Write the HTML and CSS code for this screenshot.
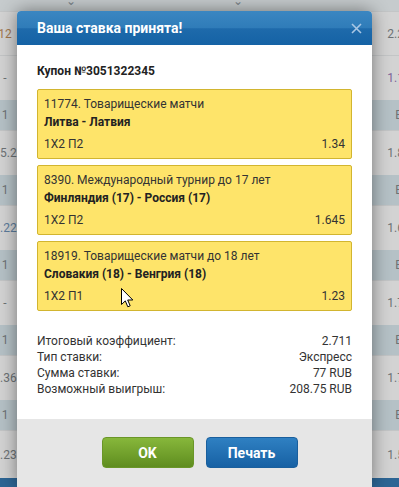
FILE: index.html
```html
<!DOCTYPE html>
<html lang="ru">
<head>
  <meta charset="UTF-8">
  <title>Ваша ставка принята!</title>
  <link rel="stylesheet" href="styles.css">
</head>
<body>
  <div class="page">
    <div class="topbar">
      <span class="chev chev-a">&#8964;</span>
      <span class="chev chev-b">&#8964;</span>
    </div>
    <div class="row light h44"><span class="lcell orange">12</span><span class="rcell">2.21</span></div>
    <div class="row light h45"><span class="lcell">-</span><span class="rcell purple">1.14</span></div>
    <div class="row blue"><span class="lcell">1</span><span class="rcell">Б</span></div>
    <div class="row light h45"><span class="lcell">15.2</span><span class="rcell">1.85</span></div>
    <div class="row blue"><span class="lcell">1</span><span class="rcell">Б</span></div>
    <div class="row light h45"><span class="lcell bluish">1.22</span><span class="rcell">1.64</span></div>
    <div class="row blue"><span class="lcell">1</span><span class="rcell">Б</span></div>
    <div class="row light h45"><span class="lcell">-</span><span class="rcell">1.75</span></div>
    <div class="row blue"><span class="lcell">1</span><span class="rcell">Б</span></div>
    <div class="row light h45"><span class="lcell">1.36</span><span class="rcell">1.72</span></div>
    <div class="row blue"><span class="lcell">1</span><span class="rcell">Б</span></div>
    <div class="row light h48"><span class="lcell">1.23</span><span class="rcell">1.55</span></div>
    <div class="row dark"></div>
  </div>

  <div class="modal">
    <div class="modal-head">
      <span class="modal-title">Ваша ставка принята!</span>
      <svg class="close" width="11" height="11" viewBox="0 0 11 11"><path d="M1 1L10 10M10 1L1 10" stroke="#a9c7e4" stroke-width="1.6"/></svg>
    </div>
    <div class="modal-body">
      <div class="coupon">Купон №3051322345</div>
      <div class="bets">
        <div class="bet">
          <div class="bet-league">11774. Товарищеские матчи</div>
          <div class="bet-match">Литва - Латвия</div>
          <div class="bet-row"><span>1X2 П2</span><span>1.34</span></div>
        </div>
        <div class="bet">
          <div class="bet-league">8390. Международный турнир до 17 лет</div>
          <div class="bet-match">Финляндия (17) - Россия (17)</div>
          <div class="bet-row"><span>1X2 П2</span><span>1.645</span></div>
        </div>
        <div class="bet">
          <div class="bet-league">18919. Товарищеские матчи до 18 лет</div>
          <div class="bet-match">Словакия (18) - Венгрия (18)</div>
          <div class="bet-row"><span>1X2 П1</span><span>1.23</span></div>
        </div>
      </div>
      <div class="summary">
        <div class="sum-row"><span>Итоговый коэффициент:</span><span>2.711</span></div>
        <div class="sum-row"><span>Тип ставки:</span><span>Экспресс</span></div>
        <div class="sum-row"><span>Сумма ставки:</span><span>77 RUB</span></div>
        <div class="sum-row"><span>Возможный выигрыш:</span><span>208.75 RUB</span></div>
      </div>
    </div>
    <div class="modal-foot">
      <button class="btn btn-ok">OK</button>
      <button class="btn btn-print">Печать</button>
    </div>
  </div>

  <svg class="cursor" width="13" height="20" viewBox="0 0 13 20">
    <path d="M0.5 0.5V16.5L4.3 12.9L6.8 18.8L9.2 17.8L6.7 12H11.8Z" fill="#fff" stroke="#000" stroke-width="1" stroke-linejoin="round"/>
  </svg>
</body>
</html>
```

FILE: styles.css
```css
body { margin: 0; font-family: Roboto, "Liberation Sans", Arial, sans-serif; font-size: 12px; color: #333; overflow: hidden; }
.page { width: 399px; height: 487px; background: #d2d3d3; }
.topbar { height: 11px; background: #c6cbcd; position: relative; }
.chev { position: absolute; top: -6px; font-size: 12px; color: #7b8489; }
.chev-a { left: 66px; }
.chev-b { left: 233px; }
.row { display: flex; justify-content: space-between; align-items: center; height: 30px; font-size: 12px; color: #6d7275; }
.row.light { background: #d3d3d3; border-top: 1px solid #c3c5c6; box-sizing: border-box; }
.row.blue { background: #b5c1c6; }
.row.h44 { height: 44px; }
.row.h45 { height: 45px; }
.row.h48 { height: 48px; }
.row.dark { height: 20px; background: #2d6594; }
.lcell { width: 10px; display: flex; justify-content: center; white-space: nowrap; }
.rcell { width: 6px; margin-right: -3px; display: flex; justify-content: center; white-space: nowrap; }
.orange { color: #a2774e; }
.bluish { color: #5d7c9c; }
.purple { color: #80649a; }

.modal { position: absolute; left: 17px; top: 11px; width: 355px; background: #fff; border-radius: 4px 4px 0 0; box-shadow: 0 0 18px rgba(0, 0, 0, 0.45); }
.modal-head { height: 34px; display: flex; align-items: center; justify-content: space-between; padding: 0 10px 0 20px; border-radius: 4px 4px 0 0; background: linear-gradient(#3b86c1, #2f7cb9 50%, #1e6aab 52%, #1562a5); }
.modal-title { color: #fff; font-size: 14px; font-weight: bold; }
.close { display: block; margin-top: 1px; }
.modal-body { padding: 18px 20px 22px; }
.coupon { font-weight: bold; line-height: 16px; margin-bottom: 10px; color: #222; }
.bets { display: flex; flex-direction: column; gap: 6px; }
.bet { background: #fee46a; border: 1px solid #d2b52f; border-radius: 2px; padding: 5px 6px; line-height: 18px; }
.bet-match { font-weight: bold; color: #222; }
.bet-row { display: flex; justify-content: space-between; margin-top: 4px; }
.summary { margin-top: 22px; line-height: 16px; }
.sum-row { display: flex; justify-content: space-between; }
.modal-foot { background: #e6e6e6; height: 68px; display: flex; justify-content: center; align-items: flex-start; gap: 12px; padding: 18px 0 0 10px; box-sizing: border-box; }
.btn { width: 92px; height: 31px; border-radius: 4px; color: #fff; font-family: Roboto, "Liberation Sans", Arial, sans-serif; font-size: 14px; font-weight: bold; cursor: pointer; }
.btn-ok { background: linear-gradient(#87b73b, #5f8d1f); border: 1px solid #6a9628; }
.btn-print { background: linear-gradient(#2f80c2, #1761a4); border: 1px solid #1a5f9d; }
.cursor { position: absolute; left: 121px; top: 288px; }
```
